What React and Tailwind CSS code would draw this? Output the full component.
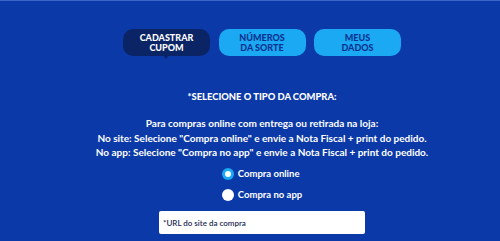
const F = { fontFamily: 'Lato, "Noto Sans", sans-serif' };

function Tab({ label, active }) {
  return (
    <div className="relative">
      <div
        className={
          'w-[87px] h-[27px] rounded-[10px] flex items-center justify-center text-center text-[9px] leading-[10px] font-black uppercase ' +
          (active ? 'bg-[#0a2466] text-white' : 'bg-[#1aa9f2] text-[#0c3391]')
        }
      >
        {label}
      </div>
      {active && (
        <div className="absolute left-[40px] top-[26px] w-0 h-0 border-l-[3px] border-r-[3px] border-t-[4px] border-l-transparent border-r-transparent border-t-[#0a2466]" />
      )}
    </div>
  );
}

function Radio({ checked, label }) {
  return (
    <label className="flex items-center gap-[4px]">
      {checked ? (
        <span className="w-[12px] h-[12px] rounded-full bg-[#1aa9f2] flex items-center justify-center">
          <span className="w-[6px] h-[6px] rounded-full bg-white" />
        </span>
      ) : (
        <span className="w-[12px] h-[12px] rounded-full bg-white" />
      )}
      <span className="text-[9.5px] font-bold text-white">{label}</span>
    </label>
  );
}

export default function App() {
  return (
    <div className="w-[500px] h-[241px] bg-[#0b3aa8] border-t border-[#3a66c8] overflow-hidden pl-[24px]" style={F}>
      <div className="flex flex-col items-center">
        <div className="flex gap-[8.5px] mt-[28px]">
          <Tab label={<>Cadastrar<br />Cupom</>} active />
          <Tab label={<>Números<br />da Sorte</>} />
          <Tab label={<>Meus<br />Dados</>} />
        </div>

        <h2 className="mt-[34px] text-[9.4px] font-black text-white">*SELECIONE O TIPO DA COMPRA:</h2>

        <div className="mt-[12px] text-center text-[10px] leading-[14.5px] font-bold text-white">
          <p>Para compras online com entrega ou retirada na loja:</p>
          <p>No site: Selecione "Compra online" e envie a Nota Fiscal + print do pedido.</p>
          <p>No app: Selecione "Compra no app" e envie a Nota Fiscal + print do pedido.</p>
        </div>

        <div className="mt-[7px] flex flex-col gap-[7px]">
          <Radio checked label="Compra online" />
          <Radio label="Compra no app" />
        </div>

        <div className="mt-[9px] w-[206px] h-[23px] bg-white rounded-[2px] flex items-center px-[4px]">
          <span className="text-[8px] font-semibold text-[#1b2a55]">*URL do site da compra</span>
        </div>
      </div>
    </div>
  );
}
